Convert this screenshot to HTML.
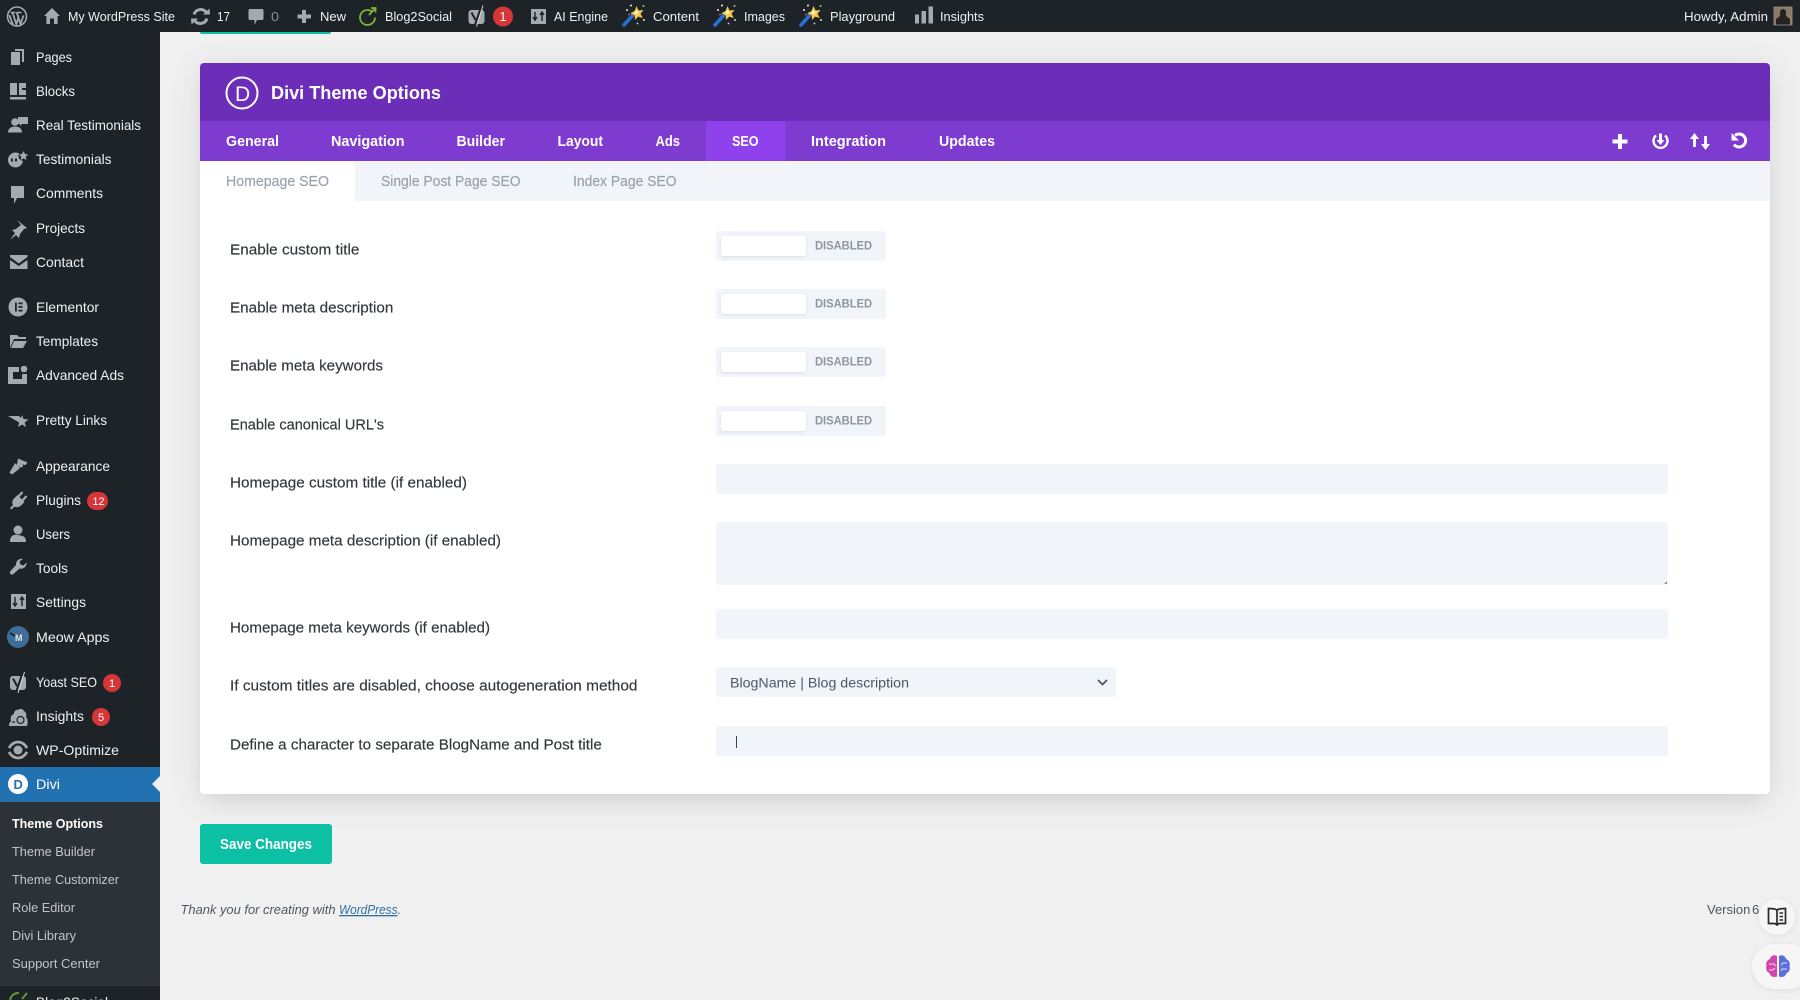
<!DOCTYPE html>
<html lang="en"><head><meta charset="utf-8"><title>Divi Theme Options</title>
<style>
html,body{margin:0;padding:0;width:1800px;height:1000px;overflow:hidden;background:#f0f0f1}
body{position:relative;font-family:"Liberation Sans",sans-serif}
.b{position:absolute;box-sizing:border-box}
#top{left:0;top:0;width:1800px;height:32px;background:#1d2327}
#side{left:0;top:32px;width:160px;height:968px;background:#1d2327}
#act{left:0;top:767px;width:160px;height:35px;background:#2271b1}
#sub{left:0;top:802px;width:160px;height:184px;background:#2c3338}
#stub{left:200px;top:32px;width:131px;height:2px;background:#0cc0a4;border-radius:0 0 3px 3px}
#card{left:200px;top:63px;width:1570px;height:731px;background:#fff;border-radius:4px;box-shadow:0 5px 35px rgba(0,0,0,.09),0 10px 20px -6px rgba(0,0,0,.07)}
#head{left:200px;top:63px;width:1570px;height:58px;background:#6c2eb9;border-radius:4px 4px 0 0}
#tabs{left:200px;top:121px;width:1570px;height:40px;background:#7e3bd0}
#seo{left:706px;top:121px;width:79px;height:40px;background:#8f42ec}
#subt{left:355px;top:161px;width:1415px;height:40px;background:#f1f5f9}
.tg{left:716px;width:170px;height:30px;background:#f1f5f9;border-radius:3px}
.kn{left:721px;width:85px;height:20px;background:#fff;border-radius:3px;box-shadow:0 1px 3px rgba(0,0,0,.1)}
.in{left:716px;width:952px;background:#f1f5f9;border-radius:3px}
#save{left:200px;top:824px;width:132px;height:40px;background:#0cc0a4;border-radius:3px}
#book{left:1759px;top:899px;width:36px;height:36px;border-radius:50%;background:#f6f6f6;box-shadow:0 1px 6px rgba(0,0,0,.08)}
#brain{left:1752px;top:944px;width:60px;height:45px;border-radius:23px;background:#f6f6f6;box-shadow:0 1px 6px rgba(0,0,0,.08)}
svg#o{position:absolute;left:0;top:0}
text{font-family:"Liberation Sans",sans-serif}
.t{font-size:13px;fill:#f0f0f1}
.s{font-size:14px;fill:#f0f0f1}
.u{font-size:13px;fill:#c3c4c7}
.l{font-size:14.5px;fill:#32373c;stroke:#32373c;stroke-width:.15px}
.m{font-size:15px;fill:#fff;font-weight:bold}
.n{font-size:14.5px;fill:#9aa3ac;stroke:#9aa3ac;stroke-width:.2px}
.d{font-size:12px;font-weight:bold;fill:#8e969e}
.f{font-size:13px;font-style:italic;fill:#50575e}
.ic{fill:#a7aaad}
</style></head><body>
<div class="b" id="top"></div><div class="b" id="side"></div><div class="b" id="act"></div><div class="b" id="sub"></div>
<div class="b" id="stub"></div>
<div class="b" id="card"></div><div class="b" id="head"></div><div class="b" id="tabs"></div><div class="b" id="seo"></div><div class="b" id="subt"></div>
<div class="b tg" style="top:231px"></div><div class="b kn" style="top:236px"></div>
<div class="b tg" style="top:289px"></div><div class="b kn" style="top:294px"></div>
<div class="b tg" style="top:347px"></div><div class="b kn" style="top:352px"></div>
<div class="b tg" style="top:406px"></div><div class="b kn" style="top:411px"></div>
<div class="b in" style="top:464px;height:30px"></div>
<div class="b in" style="top:522px;height:63px"></div>
<div class="b in" style="top:609px;height:30px"></div>
<div class="b in" style="top:667px;height:30px;width:400px"></div>
<div class="b in" style="top:726px;height:30px"></div>
<div class="b" id="save"></div>
<div class="b" style="left:1707px;top:901px;width:60px;height:17px;overflow:hidden;font-size:13px;word-spacing:-2px;line-height:17px;color:#50575e;white-space:nowrap">Version 6.5</div>
<div class="b" id="book"></div><div class="b" id="brain"></div>

<svg id="o" width="1800" height="1000" viewBox="0 0 1800 1000" xmlns="http://www.w3.org/2000/svg">
<defs>
<g id="wand">
<path d="M1 21L10 11" stroke="#2a6fd0" stroke-width="3.600" stroke-linecap="round"/>
<path d="M13.500 2l2 4.500 5-.5-3 3.700 2.300 4.300-4.600-1.400-3.200 3.400-.3-4.700-4.400-2 4.300-2.300z" fill="#f7c948"/>
<circle cx="13.500" cy="8.500" r="2" fill="#fdeeb0"/>
<circle cx="4" cy="6" r="1" fill="#e8e8e8"/><circle cx="8" cy="1.500" r="1" fill="#f0f0f0"/><circle cx="20.500" cy="2" r="1" fill="#7bd67b"/><circle cx="6" cy="10.500" r=".9" fill="#e96b6b"/><circle cx="21" cy="16" r="1" fill="#d8d8d8"/><circle cx="14.500" cy="19.500" r=".9" fill="#d8d8d8"/>
</g>
</defs>

<!-- admin bar icons -->
<g>
<circle cx="17" cy="16.500" r="9.500" fill="none" stroke="#a7aaad" stroke-width="1.500"/>
<path d="M10.500 12.500h5M16.500 12.500h5" stroke="#a7aaad" stroke-width="1.400"/>
<path d="M12.500 12.500l3.800 11.500 2.200-6.500-1.800-5M16.700 12.500l3.800 11.500 3-8.500" fill="none" stroke="#a7aaad" stroke-width="1.800"/>
<path d="M9.300 15l3.500 9.500" stroke="#a7aaad" stroke-width="1.800"/>
<path class="ic" d="M52 8l8 8h-2.400v8H54v-5.500h-4V24h-3.600v-8H44z"/>
<path d="M194 14.500a7 7 0 0 1 12-2.500M207 18.500a7 7 0 0 1-12 2.500" fill="none" stroke="#a7aaad" stroke-width="3"/><path class="ic" d="M203 14.500l7 0-.5-6zM198 18.500l-7 0 .5 6z"/>
<path class="ic" d="M250 9h12a1.500 1.500 0 0 1 1.500 1.500v8a1.500 1.500 0 0 1-1.500 1.500h-5l-2.500 5V20H250a1.500 1.500 0 0 1-1.500-1.500v-8A1.500 1.500 0 0 1 250 9z"/>
<path d="M304 10v13M297.500 16.500h13.500" stroke="#a7aaad" stroke-width="4"/>
<path d="M372 11.500a7.500 7.500 0 1 0 3 6" fill="none" stroke="#7fb23a" stroke-width="1.800"/><path d="M369 15l6-6.500M371 8h4.500v4.500" fill="none" stroke="#7fb23a" stroke-width="1.800"/>
<rect x="468.500" y="10" width="16" height="14" rx="3" fill="#a7aaad"/><path d="M471.500 12.500l4 7.500M481 7l-6 18" fill="none" stroke="#1d2327" stroke-width="2"/><path d="M483 5.500l-6.500 21" stroke="#d8d8d8" stroke-width="1"/>
<circle cx="503" cy="16.500" r="10" fill="#d63638"/>
<path class="ic" d="M531 9h15v15h-15z"/><path d="M535 12v9M533 17l2 3 2-3M542 21v-9M540 15l2-3 2 3" fill="none" stroke="#1d2327" stroke-width="1.400"/>
<use href="#wand" x="623" y="4"/><use href="#wand" x="714" y="4"/><use href="#wand" x="800" y="4"/>
<path class="ic" d="M915 14.500h4v9h-4zM921.500 11h4.500v12.500h-4.500zM928.500 6.500h4.500v17h-4.500z"/>
<rect x="1774" y="7" width="18" height="18" fill="#8a7b68"/><path d="M1776 25v-6l4-3v-4a3 3 0 0 1 6 0v4l4 3v6z" fill="#262320"/><rect x="1774" y="7" width="18" height="18" fill="none" stroke="#9b9284" stroke-width=".8"/>
</g>
<!-- admin bar text -->
<g class="tb">
<text class="t" x="68" y="21" textLength="107" lengthAdjust="spacingAndGlyphs">My WordPress Site</text>
<text class="t" x="217" y="21" textLength="13" lengthAdjust="spacingAndGlyphs">17</text>
<text class="t" x="271" y="21" style="fill:#8c8f94" textLength="8" lengthAdjust="spacingAndGlyphs">0</text>
<text class="t" x="320" y="21" textLength="26" lengthAdjust="spacingAndGlyphs">New</text>
<text class="t" x="385" y="21" textLength="67" lengthAdjust="spacingAndGlyphs">Blog2Social</text>
<text class="t" x="499.500" y="21" style="fill:#fff" textLength="7" lengthAdjust="spacingAndGlyphs">1</text>
<text class="t" x="554" y="21" textLength="54" lengthAdjust="spacingAndGlyphs">AI Engine</text>
<text class="t" x="653" y="21" textLength="46" lengthAdjust="spacingAndGlyphs">Content</text>
<text class="t" x="744" y="21" textLength="41" lengthAdjust="spacingAndGlyphs">Images</text>
<text class="t" x="830" y="21" textLength="65" lengthAdjust="spacingAndGlyphs">Playground</text>
<text class="t" x="940" y="21" textLength="44" lengthAdjust="spacingAndGlyphs">Insights</text>
<text class="t" x="1684" y="21" textLength="84" lengthAdjust="spacingAndGlyphs">Howdy, Admin</text>
</g>

<!-- sidebar icons -->
<g>
<path class="ic" d="M15 49h9v13h-2V51h-7zM11 52h9v13h-9z"/>
<path class="ic" d="M10 83h7v12h-7zM19 83h7v5h-4v2h4v5h-7zM10 97h16v2.500H10z"/>
<circle class="ic" cx="15" cy="122" r="3.800"/><path class="ic" d="M8 132.500c0-4 3-6 7-6s7 2 7 6z"/><path class="ic" d="M18 117h10v7h-6l-2 2v-2h-2z"/>
<circle class="ic" cx="15.500" cy="160" r="7.500"/><circle cx="23.500" cy="156" r="5" fill="#1d2327"/><path class="ic" d="M23.500 151l1.500 3 3 .5-2.200 2.200.5 3.300-2.800-1.600-2.800 1.600.5-3.300-2.200-2.200 3-.5z"/><path d="M12 158.500v3M16 158.500v3" stroke="#1d2327" stroke-width="2"/>
<path class="ic" d="M11 186h13v12h-7l-3 6v-6h-3z"/>
<path class="ic" d="M17 220l10 8-3 1-4 5-1 4-3-3-6 5 5-7-3-3 4-1 5-4z"/>
<path class="ic" d="M10 255h17.500v2l-8.750 6.500L10 257zM10 260l8.750 6 8.750-6v9H10z"/>
<circle class="ic" cx="18" cy="307" r="9.500"/><path d="M15 302.500h1.800v9H15zM18.500 302.500h4v1.800h-4zM18.500 306h4v1.800h-4zM18.500 309.700h4v1.800h-4z" fill="#1d2327"/>
<path class="ic" d="M10 335h7l2 2h7v2H14l-4 9zM14 341h13l-4 7H11z"/>
<path class="ic" d="M8 367h11v5h-6v7h9v-5h5v10H8z"/><circle class="ic" cx="24" cy="369" r="3.300"/>
<path class="ic" d="M8 416h11l2 2 1-3 1.500 4 5 .5-3.800 3 1.300 4.500-4-2.500-4 2.500 1.200-4.500z"/>
<path class="ic" d="M18 458.500l9.500 4-2 2.500-3-.5.5 2.500-3 .5-1-1.500-.5 2.500-2-1.500z"/><path class="ic" d="M15 463l5 5-1 1-7 5.500-2.500-2 4.500-7.500z"/>
<path class="ic" d="M10 508l3-3c-1.500-2.500-.5-5 1.500-7l3-3 7 7-3 3c-2 2-4.500 3-7 1.500l-3 3z"/><path d="M18.500 496.500l4-4.500M22.500 500.500l4-4.500" stroke="#a7aaad" stroke-width="2.200"/>
<circle class="ic" cx="18" cy="530" r="4.500"/><path class="ic" d="M10 542c0-6 3-8 8-7s8 1 8 7z"/>
<path class="ic" d="M23 559a5.500 5.500 0 0 0-7 6l-5.500 6a2 2 0 0 0 3 3l6-5.500a5.500 5.500 0 0 0 7-6l-3 3-3-1-1-3z"/>
<path class="ic" d="M11 594h15v15H11z"/><path d="M15 597v9M13 603l2 3 2-3M22 606v-9M20 600l2-3 2 3" fill="none" stroke="#1d2327" stroke-width="1.400"/>
<circle cx="18" cy="637" r="11" fill="#3f6d99"/><text x="15" y="641" font-size="9" font-weight="bold" fill="#e8e8e8">M</text><path d="M10 633l5 3" stroke="#1d2327" stroke-width="1.800"/>
<rect x="10" y="676" width="16" height="14" rx="3" fill="#a7aaad"/><path d="M13 678.500l4 7.500M22.500 673l-6 18" fill="none" stroke="#1d2327" stroke-width="2"/><path d="M24.500 672l-6.500 21" stroke="#d8d8d8" stroke-width="1"/>
<path class="ic" d="M9 726c0-3 1-4 2-5-1-3 0-6 3-7 0-3 2-5 4-4 2-2 5-1 6 1 2 1 3 4 2 6 2 2 2 6 1 9z"/><circle cx="20.500" cy="720" r="3.500" fill="none" stroke="#1d2327" stroke-width="1.200"/><path d="M12 722h3" stroke="#1d2327" stroke-width="1.200"/>
<path d="M9 748c3-5 6-6 9-6s6 1 9 6M9 752c3 5 6 6 9 6s6-1 9-6" fill="none" stroke="#a7aaad" stroke-width="2.800"/><circle class="ic" cx="18" cy="750" r="4.500"/>
<circle cx="18" cy="784" r="10" fill="#fff"/><text x="13.500" y="789" font-size="13" font-weight="bold" fill="#2271b1">D</text>
<path d="M160 776l-8 8 8 8z" fill="#f0f0f1"/>
<path d="M19 993a8 8 0 1 0 7 9M22 999l5-6" fill="none" stroke="#5c9a36" stroke-width="2"/>
<rect x="87" y="492" width="21" height="18" rx="9" fill="#d63638"/>
<circle cx="112" cy="683" r="9" fill="#d63638"/>
<circle cx="101" cy="717" r="9" fill="#d63638"/>
</g>
<!-- sidebar text -->
<g>
<text class="s" x="36" y="62" textLength="36" lengthAdjust="spacingAndGlyphs">Pages</text>
<text class="s" x="36" y="96" textLength="39" lengthAdjust="spacingAndGlyphs">Blocks</text>
<text class="s" x="36" y="130" textLength="105" lengthAdjust="spacingAndGlyphs">Real Testimonials</text>
<text class="s" x="36" y="164" textLength="75.500" lengthAdjust="spacingAndGlyphs">Testimonials</text>
<text class="s" x="36" y="198" textLength="67" lengthAdjust="spacingAndGlyphs">Comments</text>
<text class="s" x="36" y="233" textLength="49" lengthAdjust="spacingAndGlyphs">Projects</text>
<text class="s" x="36" y="267" textLength="48" lengthAdjust="spacingAndGlyphs">Contact</text>
<text class="s" x="36" y="312" textLength="63" lengthAdjust="spacingAndGlyphs">Elementor</text>
<text class="s" x="36" y="346" textLength="62" lengthAdjust="spacingAndGlyphs">Templates</text>
<text class="s" x="36" y="380" textLength="88" lengthAdjust="spacingAndGlyphs">Advanced Ads</text>
<text class="s" x="36" y="425" textLength="71" lengthAdjust="spacingAndGlyphs">Pretty Links</text>
<text class="s" x="36" y="471" textLength="74" lengthAdjust="spacingAndGlyphs">Appearance</text>
<text class="s" x="36" y="505" textLength="45" lengthAdjust="spacingAndGlyphs">Plugins</text>
<text class="s" x="36" y="539" textLength="34" lengthAdjust="spacingAndGlyphs">Users</text>
<text class="s" x="36" y="573" textLength="32" lengthAdjust="spacingAndGlyphs">Tools</text>
<text class="s" x="36" y="607" textLength="50" lengthAdjust="spacingAndGlyphs">Settings</text>
<text class="s" x="36" y="642" textLength="73.500" lengthAdjust="spacingAndGlyphs">Meow Apps</text>
<text class="s" x="36" y="687" textLength="61" lengthAdjust="spacingAndGlyphs">Yoast SEO</text>
<text class="s" x="36" y="721" textLength="48" lengthAdjust="spacingAndGlyphs">Insights</text>
<text class="s" x="36" y="755" textLength="83" lengthAdjust="spacingAndGlyphs">WP-Optimize</text>
<text class="s" x="36" y="789" style="fill:#fff" textLength="24" lengthAdjust="spacingAndGlyphs">Divi</text>
<text class="u" x="12" y="828" style="fill:#fff;font-weight:bold" textLength="91" lengthAdjust="spacingAndGlyphs">Theme Options</text>
<text class="u" x="12" y="856" textLength="83" lengthAdjust="spacingAndGlyphs">Theme Builder</text>
<text class="u" x="12" y="884" textLength="107" lengthAdjust="spacingAndGlyphs">Theme Customizer</text>
<text class="u" x="12" y="912" textLength="63" lengthAdjust="spacingAndGlyphs">Role Editor</text>
<text class="u" x="12" y="940" textLength="64" lengthAdjust="spacingAndGlyphs">Divi Library</text>
<text class="u" x="12" y="968" textLength="88" lengthAdjust="spacingAndGlyphs">Support Center</text>
<text class="s" x="36" y="1007" textLength="72" lengthAdjust="spacingAndGlyphs">Blog2Social</text>
<text x="92.500" y="505" font-size="11" fill="#fff" textLength="12" lengthAdjust="spacingAndGlyphs">12</text>
<text x="109" y="687" font-size="11" fill="#fff">1</text>
<text x="98" y="721" font-size="11" fill="#fff">5</text>
</g>

<!-- card header -->
<circle cx="242" cy="93" r="15.500" fill="none" stroke="#fff" stroke-width="2"/>
<text x="235" y="101" font-size="21" fill="#fff">D</text>
<text x="271" y="99" font-size="18.500" font-weight="bold" fill="#fff" textLength="170" lengthAdjust="spacingAndGlyphs">Divi Theme Options</text>
<text class="m" x="226" y="146" textLength="53" lengthAdjust="spacingAndGlyphs">General</text>
<text class="m" x="331" y="146" textLength="73.500" lengthAdjust="spacingAndGlyphs">Navigation</text>
<text class="m" x="456.500" y="146" textLength="48.500" lengthAdjust="spacingAndGlyphs">Builder</text>
<text class="m" x="557.500" y="146" textLength="45.500" lengthAdjust="spacingAndGlyphs">Layout</text>
<text class="m" x="655.500" y="146" textLength="24.500" lengthAdjust="spacingAndGlyphs">Ads</text>
<text class="m" x="732" y="146" textLength="26.500" lengthAdjust="spacingAndGlyphs">SEO</text>
<text class="m" x="811" y="146" textLength="75" lengthAdjust="spacingAndGlyphs">Integration</text>
<text class="m" x="939" y="146" textLength="56" lengthAdjust="spacingAndGlyphs">Updates</text>
<path d="M1620 134v15M1612.500 141.500h15" stroke="#fff" stroke-width="4"/>
<path d="M1656 135.500a7 7 0 1 0 9 0" fill="none" stroke="#fff" stroke-width="2.400"/><path d="M1660.500 133.500v8" stroke="#fff" stroke-width="3"/><path d="M1656.500 140h8l-4 5z" fill="#fff"/>
<path d="M1694.500 147v-10M1705.500 136v10" stroke="#fff" stroke-width="2.800"/><path d="M1690 139l4.500-6 4.500 6zM1701 144l4.500 6 4.500-6z" fill="#fff"/>
<path d="M1735 135.500a6.500 6.500 0 1 1-1 9" fill="none" stroke="#fff" stroke-width="3"/><path d="M1731.500 133v7.500h7.500z" fill="#fff"/>

<!-- sub tabs -->
<text class="n" x="226" y="186" textLength="103" lengthAdjust="spacingAndGlyphs">Homepage SEO</text>
<text class="n" x="381" y="186" textLength="139.500" lengthAdjust="spacingAndGlyphs">Single Post Page SEO</text>
<text class="n" x="573" y="186" textLength="103.500" lengthAdjust="spacingAndGlyphs">Index Page SEO</text>

<!-- labels -->
<text class="l" x="230" y="254.500" textLength="129.400" lengthAdjust="spacingAndGlyphs">Enable custom title</text>
<text class="l" x="230" y="312.500" textLength="163.300" lengthAdjust="spacingAndGlyphs">Enable meta description</text>
<text class="l" x="230" y="370.500" textLength="153" lengthAdjust="spacingAndGlyphs">Enable meta keywords</text>
<text class="l" x="230" y="429.500" textLength="154" lengthAdjust="spacingAndGlyphs">Enable canonical URL's</text>
<text class="l" x="230" y="487.500" textLength="237" lengthAdjust="spacingAndGlyphs">Homepage custom title (if enabled)</text>
<text class="l" x="230" y="545.500" textLength="271" lengthAdjust="spacingAndGlyphs">Homepage meta description (if enabled)</text>
<text class="l" x="230" y="632.500" textLength="260" lengthAdjust="spacingAndGlyphs">Homepage meta keywords (if enabled)</text>
<text class="l" x="230" y="690.500" textLength="407.500" lengthAdjust="spacingAndGlyphs">If custom titles are disabled, choose autogeneration method</text>
<text class="l" x="230" y="749.500" textLength="371.800" lengthAdjust="spacingAndGlyphs">Define a character to separate BlogName and Post title</text>

<text class="d" x="815" y="249.500" textLength="57" lengthAdjust="spacingAndGlyphs">DISABLED</text>
<text class="d" x="815" y="307.500" textLength="57" lengthAdjust="spacingAndGlyphs">DISABLED</text>
<text class="d" x="815" y="365.500" textLength="57" lengthAdjust="spacingAndGlyphs">DISABLED</text>
<text class="d" x="815" y="424.500" textLength="57" lengthAdjust="spacingAndGlyphs">DISABLED</text>

<text x="730" y="687.500" font-size="14" fill="#4c5866" textLength="179" lengthAdjust="spacingAndGlyphs">BlogName | Blog description</text>
<path d="M1098 680l4.500 4.500 4.500-4.500" fill="none" stroke="#4c5866" stroke-width="1.800"/>
<rect x="736" y="736" width="1" height="12" fill="#3c4650"/>
<path d="M1664 584l3-3v3z" fill="#8a8f95"/>

<!-- save -->
<text x="220" y="849" font-size="15" font-weight="bold" fill="#fff" textLength="92" lengthAdjust="spacingAndGlyphs">Save Changes</text>

<!-- footer -->
<text class="f" x="180.500" y="914" textLength="155" lengthAdjust="spacingAndGlyphs">Thank you for creating with</text>
<text class="f" x="339" y="914" style="fill:#2f6f9f;text-decoration:underline" textLength="58.500" lengthAdjust="spacingAndGlyphs">WordPress</text>
<text class="f" x="397.500" y="914">.</text>
</svg>

<svg class="b" style="left:1759px;top:899px" width="36" height="36" viewBox="0 0 36 36">
<path d="M18 11c-2-1.500-5-1.500-8.500-1.500v15H16l2 1.500 2-1.500h6.500v-15C23 9.500 20 9.500 18 11zM18 11v15" fill="none" stroke="#2a2a2a" stroke-width="1.700"/>
<path d="M20.500 14h3.500M20.500 17.500h3.500M20.500 21h3.500" stroke="#2a2a2a" stroke-width="1.500"/>
</svg>
<svg class="b" style="left:1764px;top:954px" width="28" height="25" viewBox="0 0 28 25">
<path d="M13 2C10 0 6.500 2 6 5c-3 1-4.500 4-3.500 7-1 2.500 0 6 3 7 .5 3 4 5 7.500 3.500z" fill="#d347a8"/>
<path d="M15 2c3-2 6.500 0 7 3 3 1 4.500 4 3.500 7 1 2.500 0 6-3 7-.5 3-4 5-7.500 3.500z" fill="#5a6fe0"/>
<path d="M5 10h5l2 2M5 16h4l2-2M23 9h-4l-2 2M23 15h-5l-1 2" fill="none" stroke="#f4d8ee" stroke-width="1"/>
</svg>
</body></html>
